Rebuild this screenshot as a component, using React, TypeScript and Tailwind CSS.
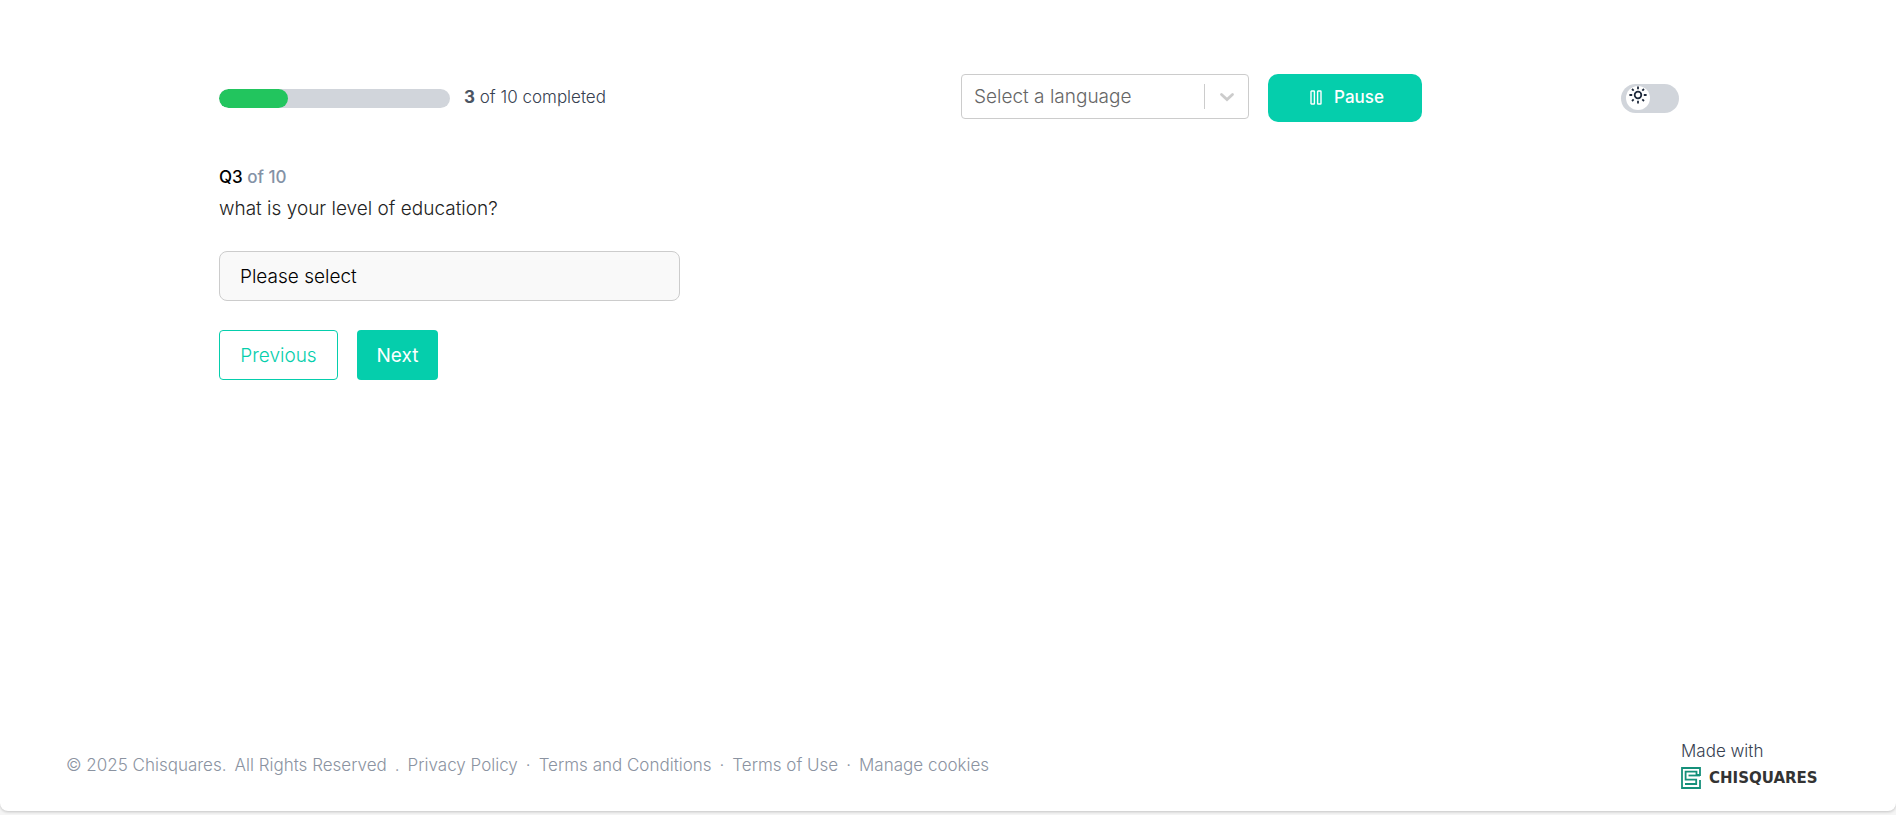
import React, { useState } from 'react';

const TOTAL = 10;
const CURRENT = 3;

const footerLinks = ['Privacy Policy', 'Terms and Conditions', 'Terms of Use', 'Manage cookies'];

function PauseIcon() {
  return (
    <svg width="12" height="16" viewBox="0 0 12 16" fill="none" stroke="currentColor" strokeWidth="1.4" aria-hidden="true">
      <rect x="1" y="1" width="3.4" height="13" rx="0.5" />
      <rect x="7.6" y="1" width="3.4" height="13" rx="0.5" />
    </svg>
  );
}

function SunIcon() {
  return (
    <svg width="18" height="18" viewBox="0 0 18 18" fill="none" stroke="#1e293b" strokeWidth="1.8" aria-hidden="true">
      <circle cx="9" cy="9" r="3.3" />
      <path d="M9 .4v2.800M9 14.800v2.800M.4 9h2.800M14.800 9h2.800M3 3l1.700 1.700M13.300 13.300l1.700 1.700M3 15l1.700-1.700M13.300 4.700l1.700-1.700" />
    </svg>
  );
}

function LogoMark() {
  return (
    <svg width="20" height="22" viewBox="0 0 20 22" fill="none" stroke="#15907a" strokeWidth="1.8" aria-hidden="true">
      <path d="M15.500 8H19V1H1v20h18v-8" />
      <path d="M15.500 8V4.600H4.600v8h10.600V17H4" />
      <path d="M7.500 8.500H19" />
    </svg>
  );
}

export default function App() {
  const [language, setLanguage] = useState('');
  const [answer, setAnswer] = useState('');
  const [dark, setDark] = useState(false);

  return (
    <div className="min-h-screen flex flex-col bg-[#f5f5f5] pb-1 font-['Inter','Open_Sans',sans-serif]">
      <div className="grow flex flex-col bg-white rounded-b-lg shadow-[0_1px_3px_rgba(0,0,0,0.2)]">
        <main className="grow w-full max-w-[1462px] mx-auto pl-0.5 pt-[74px]">
          {/* Top bar */}
          <div className="grid grid-cols-2 gap-6">
            <div className="flex items-center gap-[14px]">
              <div className="w-[231px] h-[19px] rounded-full bg-[#d1d5db] overflow-hidden">
                <div className="h-full rounded-full bg-[#22c55e]" style={{ width: `${(CURRENT / TOTAL) * 100}%` }} />
              </div>
              <p className="text-[17px] font-light text-[#374151]">
                <span className="font-bold text-[#4b5563]">{CURRENT}</span> of {TOTAL} completed
              </p>
            </div>

            <div className="flex items-center justify-between">
              <div className="flex items-start gap-[19px]">
                <div className="relative">
                  <select
                    aria-label="Select a language"
                    className="appearance-none w-72 h-[45px] pl-3 pt-0.5 rounded border border-[#ccc] bg-white text-[19px] font-light text-[#666]"
                    value={language}
                    onChange={(e) => setLanguage(e.target.value)}
                  >
                    <option value="">Select a language</option>
                    <option value="en">English</option>
                    <option value="fr">French</option>
                  </select>
                  <div className="pointer-events-none absolute inset-y-0 right-0 flex items-center gap-[14px] pr-[14px]">
                    <span className="w-px h-[25px] bg-[#ccc]" />
                    <svg width="16" height="10" viewBox="0 0 16 10" fill="none" stroke="#ccc" strokeWidth="2.800" strokeLinecap="round" aria-hidden="true">
                      <path d="M2.500 2.500L8 7.500l5.500-5" />
                    </svg>
                  </div>
                </div>
                <button className="flex items-center justify-center gap-3 w-[154px] h-12 pl-1 rounded-[10px] bg-[#05ceac] text-white text-[17px] font-medium">
                  <PauseIcon />
                  Pause
                </button>
              </div>
              <button
                role="switch"
                aria-checked={dark}
                aria-label="Dark mode"
                onClick={() => setDark(!dark)}
                className="flex items-center w-[58px] h-[29px] px-[5px] rounded-full bg-[#d1d5db]"
              >
                <span className="flex justify-center w-6 h-6 rounded-full bg-white">
                  <SunIcon />
                </span>
              </button>
            </div>
          </div>

          {/* Question */}
          <div className="mt-[43px]">
            <p className="text-[17px] leading-6 font-medium text-black">
              Q{CURRENT} <span className="text-[#8492a6]">of {TOTAL}</span>
            </p>
            <label htmlFor="education" className="block mt-1 text-[19px] leading-8 font-light text-[#222]">
              what is your level of education?
            </label>
            <select
              id="education"
              className="appearance-none block w-[461px] h-[50px] mt-[26px] px-5 pt-0.5 rounded-lg border border-[#ccc] bg-[#f9f9f9] text-[19px] font-light text-black"
              value={answer}
              onChange={(e) => setAnswer(e.target.value)}
            >
              <option value="">Please select</option>
              <option value="primary">Primary</option>
              <option value="secondary">Secondary</option>
              <option value="tertiary">Tertiary</option>
            </select>
          </div>

          <div className="flex gap-[19px] mt-[29px] text-[19px]">
            <button className="w-[119px] h-[50px] pt-0.5 rounded border border-[#05ceac] font-light text-[#05ceac]">Previous</button>
            <button className="w-[81px] h-[50px] pt-0.5 rounded bg-[#05ceac] text-white">Next</button>
          </div>
        </main>

        <footer className="flex items-center justify-between px-[66px] pb-[22px]">
          <div className="flex items-center gap-2 pt-1 text-[17px] font-light text-[#8b93a1]">
            <span>© 2025 Chisquares.</span>
            <span>All Rights Reserved</span>
            {footerLinks.map((label, i) => (
              <React.Fragment key={label}>
                <span>{i === 0 ? '.' : '·'}</span>
                <a href="#">{label}</a>
              </React.Fragment>
            ))}
          </div>
          <div className="w-[149px]">
            <p className="text-[17px] leading-6 font-light text-[#374151]">Made with</p>
            <a href="#" className="flex items-center gap-2 mt-1 text-[15px] leading-[22px] font-bold text-[#333] font-['DejaVu_Sans',sans-serif]">
              <LogoMark />
              CHISQUARES
            </a>
          </div>
        </footer>
      </div>
    </div>
  );
}
